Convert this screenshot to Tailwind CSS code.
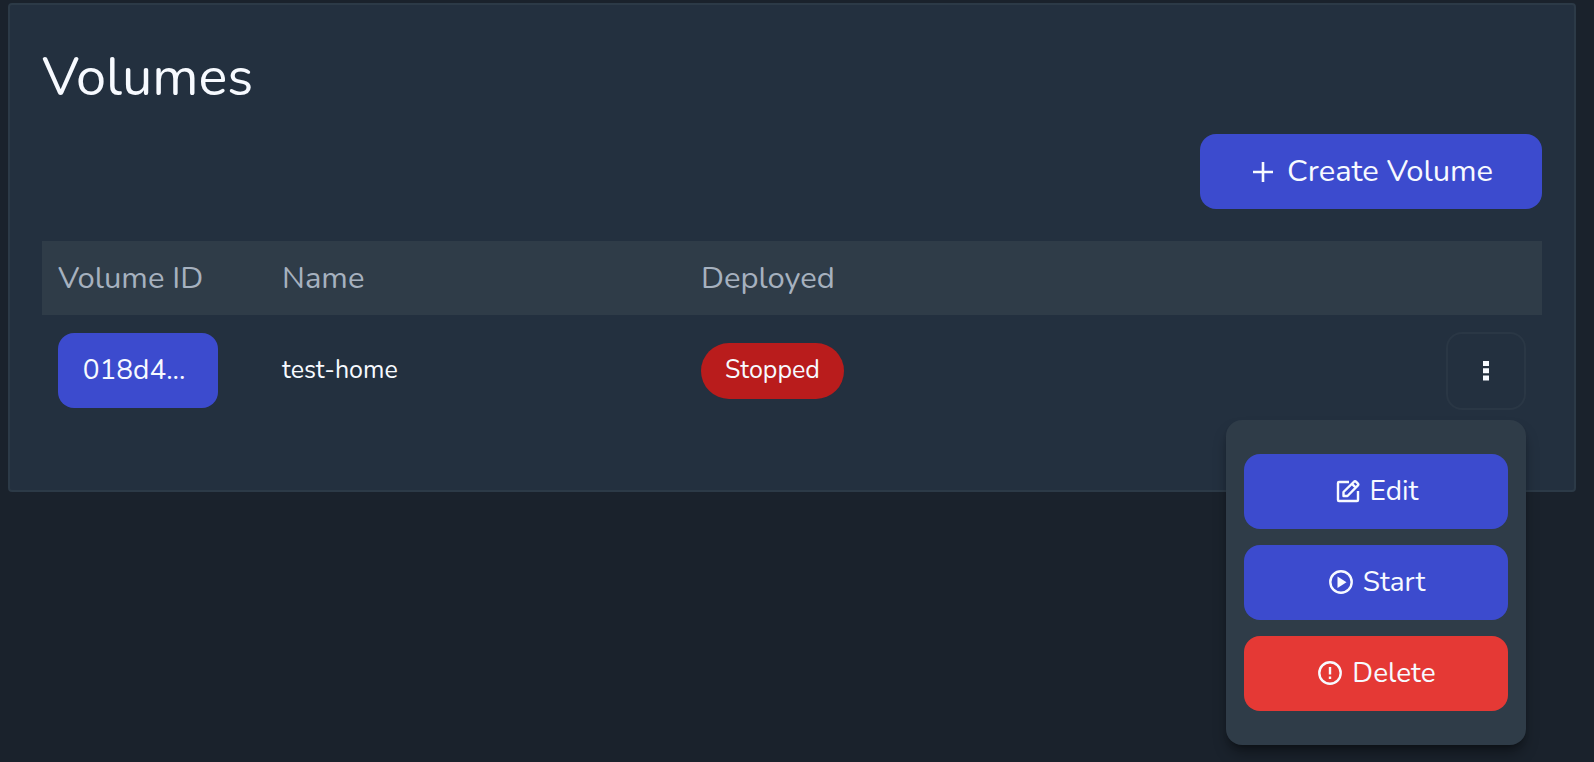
<!DOCTYPE html>
<html lang="en">
<head>
<meta charset="utf-8">
<meta name="viewport" content="width=device-width, initial-scale=1">
<title>Volumes</title>
<script src="https://cdn.jsdelivr.net/npm/@tailwindcss/browser@4"></script>
</head>
<body class="min-h-screen bg-[#1a222c] pt-[3px] pr-[18px] pl-2 font-['Nunito','Open_Sans',sans-serif] text-[#f7faff]">
<main class="rounded-[4px] border-2 border-[#2c3a47] bg-[#23303f] px-8 pt-8 pb-20">
  <h1 class="pt-2 text-[54px] leading-[64px]">Volumes</h1>
  <div class="mt-[25px] flex justify-end">
    <button type="button" class="flex h-[75px] w-[342px] items-center justify-center gap-3.5 rounded-2xl bg-[#3c4bce] pl-1 text-[31px]">
      <svg class="size-5" viewBox="0 0 20 20" fill="none" stroke="currentColor" stroke-width="2.600" aria-hidden="true"><path d="M10 0v20M0 10h20"/></svg>
      Create Volume
    </button>
  </div>
  <table class="mt-8 w-full table-fixed text-left">
    <thead class="bg-[#2f3c48] text-[31px] text-[#a6b1bf]">
      <tr class="h-[74px]">
        <th scope="col" class="w-[224px] px-4 font-normal">Volume ID</th>
        <th scope="col" class="w-[419px] px-4 font-normal">Name</th>
        <th scope="col" class="px-4 font-normal">Deployed</th>
        <th scope="col" aria-label="Actions" class="w-28 px-4"></th>
      </tr>
    </thead>
    <tbody>
      <tr>
        <td class="px-4 pt-[15px]">
          <button type="button" class="h-[75px] w-40 rounded-2xl bg-[#3c4bce] pr-2 text-[28px]">018d4...</button>
        </td>
        <td class="px-4 pt-4 text-[25px]">test-home</td>
        <td class="px-4 pt-4">
          <span class="inline-flex h-14 items-center rounded-full bg-[#b91c1c] px-6 align-middle text-[25px]">Stopped</span>
        </td>
        <td class="pt-[17px] pr-4">
          <div class="relative ml-auto w-20">
            <button type="button" aria-label="Volume actions" aria-expanded="true" class="flex h-[78px] w-full items-center justify-center rounded-2xl border-2 border-[#2a3745]">
              <svg class="h-5 w-1.5" viewBox="0 0 6 20" fill="currentColor" aria-hidden="true"><path d="M0 0h6v5H0zM0 7.200h6v5H0zM0 14.500h6v5H0z"/></svg>
            </button>
            <div class="absolute top-full right-0 mt-2.5 flex w-[300px] flex-col gap-4 rounded-2xl bg-[#2f3c48] px-[18px] py-[34px] text-[28px] shadow-lg shadow-black/40">
              <button type="button" class="flex h-[75px] items-center justify-center gap-2.5 rounded-2xl bg-[#3c4bce] pb-0.5 pl-0.5">
                <svg class="size-6" viewBox="0 0 24 24" fill="none" stroke="currentColor" stroke-width="2.400" stroke-linejoin="round" aria-hidden="true"><path d="M13 3H3Q2 3 2 4V21Q2 22 3 22H21Q22 22 22 21V12"/><path d="M7.500 17V13L17.900 2.800Q19 1.600 20.200 2.800L21.700 4.300Q22.900 5.500 21.700 6.700L11.500 17ZM16 4.800l4 4"/></svg>
                Edit
              </button>
              <button type="button" class="flex h-[75px] items-center justify-center gap-2.5 rounded-2xl bg-[#3c4bce] pb-0.5 pl-0.5">
                <svg class="size-6" viewBox="0 0 24 24" fill="none" stroke="currentColor" stroke-width="2.400" aria-hidden="true"><circle cx="12" cy="12" r="10.700"/><path d="M8.500 6.500v11.500l9-5.750z" fill="currentColor" stroke="none"/></svg>
                Start
              </button>
              <button type="button" class="flex h-[75px] items-center justify-center gap-2.5 rounded-2xl bg-[#e53935] pb-0.5 pl-0.5">
                <svg class="size-6" viewBox="0 0 24 24" fill="none" stroke="currentColor" stroke-width="2.400" aria-hidden="true"><circle cx="12" cy="12" r="10.700"/><path d="M12 6v7.500M12 15.500v2.500"/></svg>
                Delete
              </button>
            </div>
          </div>
        </td>
      </tr>
    </tbody>
  </table>
</main>
</body>
</html>
